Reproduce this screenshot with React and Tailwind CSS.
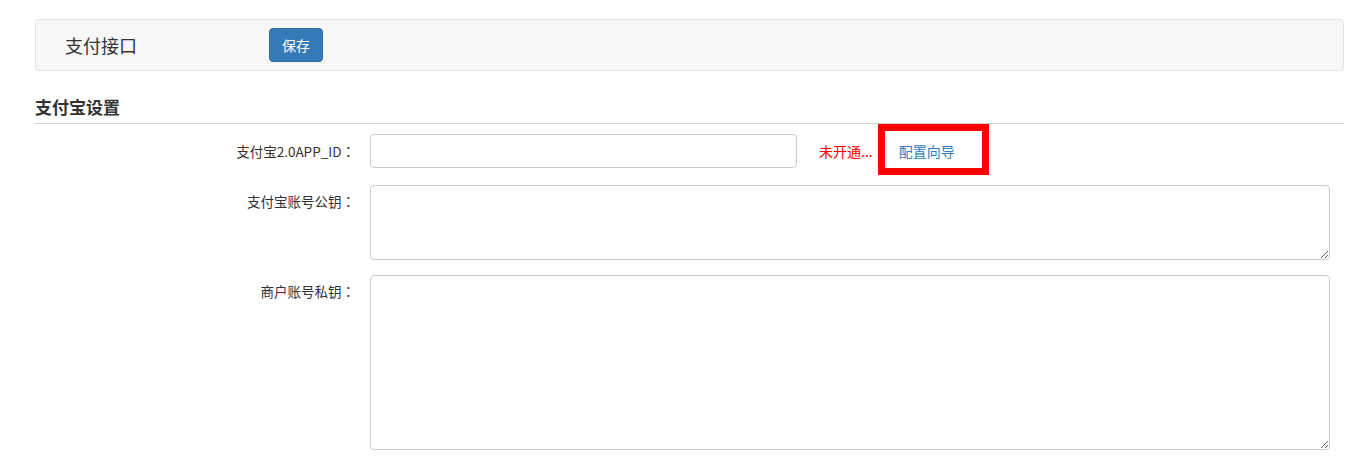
export default function App() {
  const font = { fontFamily: '"Noto Sans CJK SC", "Noto Sans", sans-serif' };
  const colon = { fontFamily: '"Noto Sans CJK JP", sans-serif' };
  return (
    <div className="w-[1361px] h-[463px] bg-white pl-[35px] pr-[17px] pt-[19px] text-[#333]" style={font}>
      <div className="h-[52px] border border-[#e3e3e3] bg-[#f7f7f7] rounded-[4px] flex items-center">
        <div className="ml-[29px] w-[204px] text-[18px] leading-[22px] text-[#333]">支付接口</div>
        <button className="w-[54px] h-[34px] rounded-[4px] bg-[#337ab7] border border-[#2e6da4] text-white text-[14px] leading-[20px]">保存</button>
      </div>
      <div className="mt-[24px] pb-[5px] border-b border-[#d0d0d0] text-[17px] leading-[23px] font-bold text-[#333]">支付宝设置</div>
      <div className="mt-[10px] flex flex-col">
        <div className="flex items-center">
          <div className="w-[320px] text-right text-[13.5px] leading-[20px] text-[#333]">支付宝2.0APP_ID<span style={colon}>：</span></div>
          <div className="ml-[15px] w-[427px] h-[34px] border border-[#ccc] rounded-[4px] bg-white" />
          <span className="ml-[22px] text-[14px] leading-[20px] text-[#ff0000]">未开通...</span>
          <span className="relative ml-[26px] text-[14px] leading-[20px] text-[#337ab7]">
            配置向导
            <span className="absolute left-[-21px] top-[-17px] w-[111px] h-[51px] border-[7px] border-[#ff0000]" />
          </span>
        </div>
        <div className="flex items-start mt-[17px]">
          <div className="w-[320px] pt-[6px] text-right text-[13.5px] leading-[20px] text-[#333]">支付宝账号公钥<span style={colon}>：</span></div>
          <textarea className="ml-[15px] w-[960px] h-[75px] border border-[#ccc] rounded-[4px] bg-white resize-y outline-none" />
        </div>
        <div className="flex items-start mt-[15px]">
          <div className="w-[320px] pt-[6px] text-right text-[13.5px] leading-[20px] text-[#333]">商户账号私钥<span style={colon}>：</span></div>
          <textarea className="ml-[15px] w-[960px] h-[175px] border border-[#ccc] rounded-[4px] bg-white resize-y outline-none" />
        </div>
      </div>
    </div>
  );
}
